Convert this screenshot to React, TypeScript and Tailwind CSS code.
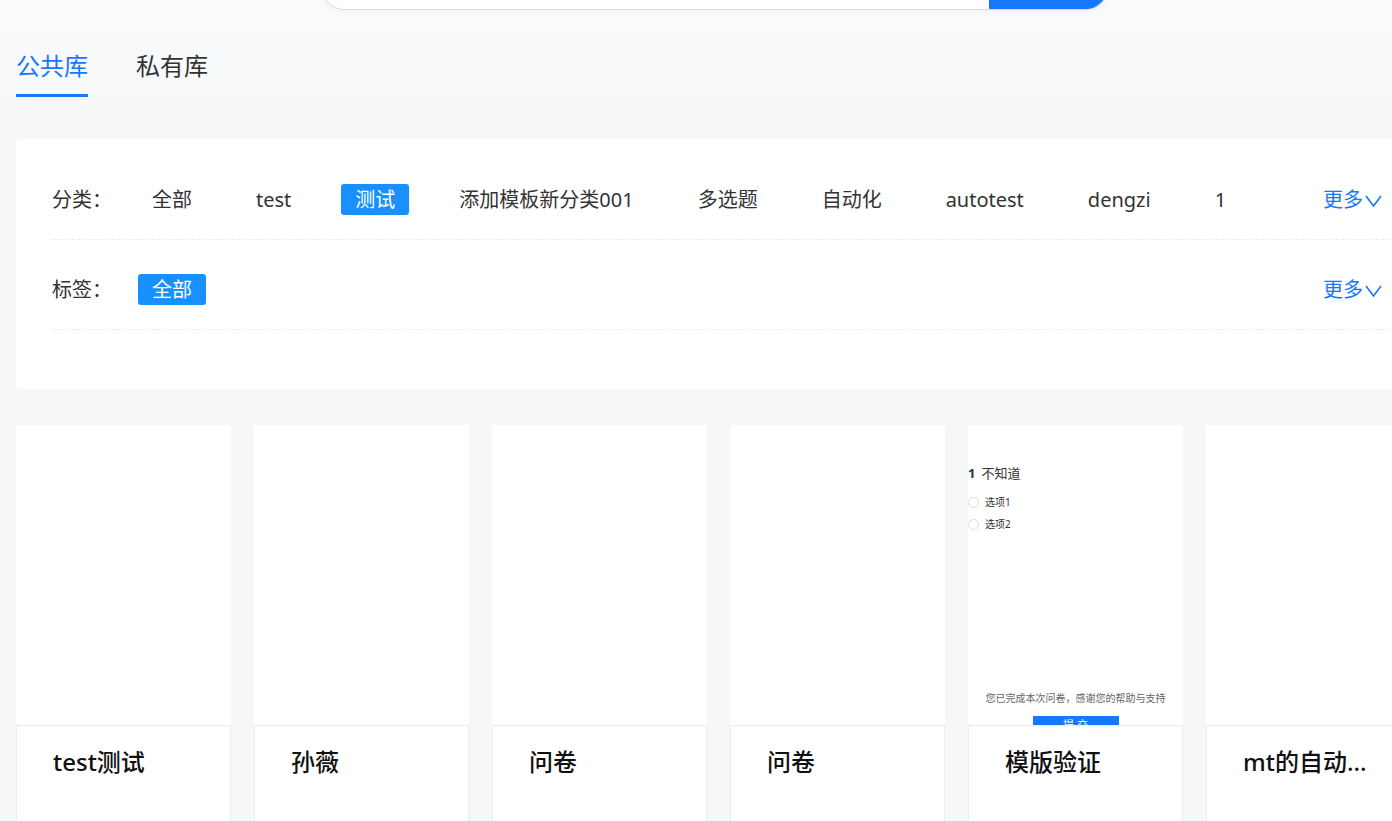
import { useState } from 'react'

const categories = ['全部', 'test', '测试', '添加模板新分类001', '多选题', '自动化', 'autotest', 'dengzi', '1']
const tags = ['全部']

const templates = [
  { id: 1, title: 'test测试' },
  { id: 2, title: '孙薇' },
  { id: 3, title: '问卷' },
  { id: 4, title: '问卷' },
  { id: 5, title: '模版验证', preview: true },
  { id: 6, title: 'mt的自动...' },
]

function ChevronDown() {
  return (
    <svg width="17" height="12" viewBox="0 0 17 12" fill="none" className="ml-[2px] mt-[3px]">
      <polyline points="1,1 8.5,11 16,1" stroke="#1677ff" strokeWidth="1.6" strokeLinejoin="miter" />
    </svg>
  )
}

function FilterRow({
  label,
  items,
  active,
  onPick,
  className = '',
}: {
  label: string
  items: string[]
  active: string
  onPick: (v: string) => void
  className?: string
}) {
  return (
    <div className={`flex h-[80px] items-center border-b border-dashed border-[#ebebeb] ${className}`}>
      <span className="w-[86px] shrink-0 text-[20px] text-[#333]">{label}</span>
      <div className="flex items-center gap-[36px]">
        {items.map((item) => (
          <button
            key={item}
            type="button"
            onClick={() => onPick(item)}
            className={
              item === active
                ? 'h-[31px] rounded-[3px] bg-[#1890ff] px-[14px] text-[20px] leading-[31px] text-white'
                : 'h-[31px] px-[14px] text-[20px] leading-[31px] text-[#333]'
            }
          >
            {item}
          </button>
        ))}
      </div>
      <button type="button" className="ml-auto mr-[12px] flex items-center text-[20px] text-[#1677ff]">
        更多
        <ChevronDown />
      </button>
    </div>
  )
}

function SurveyPreview() {
  return (
    <div className="flex h-full flex-col pt-[40px] text-[#333]">
      <div className="flex h-[18px] items-center text-[13px]">
        <span className="font-bold">1</span>
        <span className="ml-[6px]">不知道</span>
      </div>
      <div className="mt-[12px] flex h-[16px] items-center text-[10px]">
        <span className="h-[11px] w-[11px] rounded-full border border-[#dcdcdc]" />
        <span className="ml-[6px]">选项1</span>
      </div>
      <div className="mt-[7px] flex h-[16px] items-center text-[10px]">
        <span className="h-[11px] w-[11px] rounded-full border border-[#dcdcdc]" />
        <span className="ml-[6px]">选项2</span>
      </div>
      <p className="mt-[159px] text-center text-[10px] leading-[14px] text-[#666]">
        您已完成本次问卷，感谢您的帮助与支持
      </p>
      <div className="mx-auto mt-[11px] h-[28px] w-[86px] shrink-0 bg-[#1677ff] pt-[2px] text-center text-[11px] leading-[14px] text-white">
        提 交
      </div>
    </div>
  )
}

export default function App() {
  const [tab, setTab] = useState('公共库')
  const [category, setCategory] = useState('测试')
  const [tag, setTag] = useState('全部')

  return (
    <div
      className="h-[821px] w-full overflow-hidden bg-[#f6f7f9]"
      style={{ fontFamily: '"Noto Sans", "Noto Sans CJK SC", sans-serif' }}
    >
      <div className="w-[1430px]">
        <header className="bg-gradient-to-b from-[#fbfcfd] to-[#f6f7f9] pb-[42px]">
          <div className="-mt-[34px] ml-[322px] flex h-[44px] w-[786px] overflow-hidden rounded-[22px] border border-[#d9d9d9] bg-white shadow-[0_2px_6px_rgba(0,0,0,0.04)]">
            <input className="flex-1 px-5 outline-none" aria-label="搜索模板" />
            <button type="button" aria-label="搜索" className="w-[118px] bg-[#1677ff]" />
          </div>

          <nav className="mt-[40px] flex gap-[48px] pl-4">
            {['公共库', '私有库'].map((t) => (
              <button
                key={t}
                type="button"
                onClick={() => setTab(t)}
                className={`flex flex-col items-stretch text-[24px] leading-[32px] ${
                  t === tab ? 'text-[#1677ff]' : 'text-[#333]'
                }`}
              >
                <span className="pb-[12px]">{t}</span>
                <span className={`h-[3px] ${t === tab ? 'bg-[#1677ff]' : 'bg-transparent'}`} />
              </button>
            ))}
          </nav>
        </header>

        <section className="ml-4 rounded-[4px] bg-white pb-[59px] pl-9 pr-9 pt-[21px]">
          <FilterRow label="分类：" items={categories} active={category} onPick={setCategory} />
          <FilterRow label="标签：" items={tags} active={tag} onPick={setTag} className="mt-[10px]" />
        </section>

        <div className="mt-[36px] flex gap-[23px] pl-4">
          {templates.map((tpl) => (
            <div key={tpl.id} className="w-[215px] shrink-0">
              <div className="h-[300px] overflow-hidden bg-white">{tpl.preview && <SurveyPreview />}</div>
              <div className="h-[130px] border border-[#ebedf0] bg-white pl-[36px] pt-[19px]">
                <p className="whitespace-nowrap text-[24px] font-medium leading-[34px] text-[#111]">{tpl.title}</p>
              </div>
            </div>
          ))}
        </div>
      </div>
    </div>
  )
}
